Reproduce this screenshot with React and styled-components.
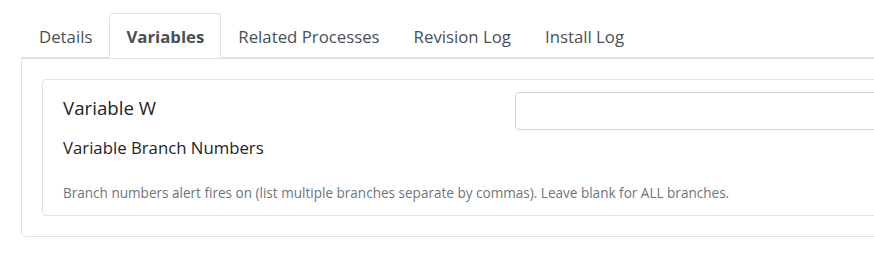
import { useState } from "react";
import styled, { createGlobalStyle } from "styled-components";

const tabs = [
  "Details",
  "Variables",
  "Related Processes",
  "Revision Log",
  "Install Log",
];

const App = () => {
  const [active, setActive] = useState("Variables");
  const [branches, setBranches] = useState("");

  return (
    <>
      <GlobalStyle />
      <Page>
        <TabNavigation>
          {tabs.map((tab) => (
            <TabButton
              key={tab}
              $active={active === tab}
              onClick={() => setActive(tab)}
            >
              {tab}
            </TabButton>
          ))}
        </TabNavigation>

        <TabPanel>
          <VariableCard>
            <FieldRow>
              <VariableTitle>Variable W</VariableTitle>
              <TextInput
                value={branches}
                onChange={(e) => setBranches(e.target.value)}
              />
            </FieldRow>
            <FieldLabel>Variable Branch Numbers</FieldLabel>
            <HelpText>
              Branch numbers alert fires on (list multiple branches separate by
              commas). Leave blank for ALL branches.
            </HelpText>
          </VariableCard>
        </TabPanel>
      </Page>
    </>
  );
};

const GlobalStyle = createGlobalStyle`
  html, body {
    margin: 0;
    padding: 0;
    background: #ffffff;
    overflow: hidden;
  }
  body {
    font-family: "Open Sans", "Noto Sans", sans-serif;
    color: #212529;
  }
`;

const Page = styled.div`
  width: 1240px;
  padding: 13px 0 0 21px;
`;

const TabNavigation = styled.div`
  display: flex;
  padding-left: 1px;
  border-bottom: 1px solid #dee2e6;
`;

const TabButton = styled.button`
  margin-bottom: -1px;
  padding: 9px 16px 7px;
  background: ${(props) => (props.$active ? "#ffffff" : "transparent")};
  border: 1px solid ${(props) => (props.$active ? "#dee2e6" : "transparent")};
  border-bottom-color: ${(props) => (props.$active ? "#ffffff" : "transparent")};
  border-radius: 4px 4px 0 0;
  font-family: "Open Sans", "Noto Sans", sans-serif;
  font-size: 16.8px;
  line-height: 27px;
  font-weight: ${(props) => (props.$active ? 700 : 400)};
  color: #495057;
  cursor: pointer;
`;

const TabPanel = styled.div`
  padding: 20px;
  border: 1px solid #dee2e6;
  border-radius: 0 0 5px 5px;
`;

const VariableCard = styled.div`
  padding: 12px 20px 12px;
  border: 1px solid #dee2e6;
  border-radius: 4px;
`;

const FieldRow = styled.div`
  display: grid;
  grid-template-columns: 452px 1fr;
  align-items: center;
`;

const VariableTitle = styled.div`
  font-size: 18.7px;
  line-height: 28px;
  color: #212529;
  align-self: start;
  padding-top: 2px;
`;

const TextInput = styled.input`
  box-sizing: border-box;
  height: 38px;
  padding: 6px 12px;
  border: 1px solid #ced4da;
  border-radius: 4px;
  font-family: "Open Sans", "Noto Sans", sans-serif;
  font-size: 16px;
  color: #495057;
  outline: none;
`;

const FieldLabel = styled.div`
  margin-top: 5px;
  font-size: 16.75px;
  line-height: 25px;
  color: #212529;
`;

const HelpText = styled.div`
  margin-top: 24px;
  font-size: 13.55px;
  line-height: 19px;
  color: #6c757d;
`;

export default App;
